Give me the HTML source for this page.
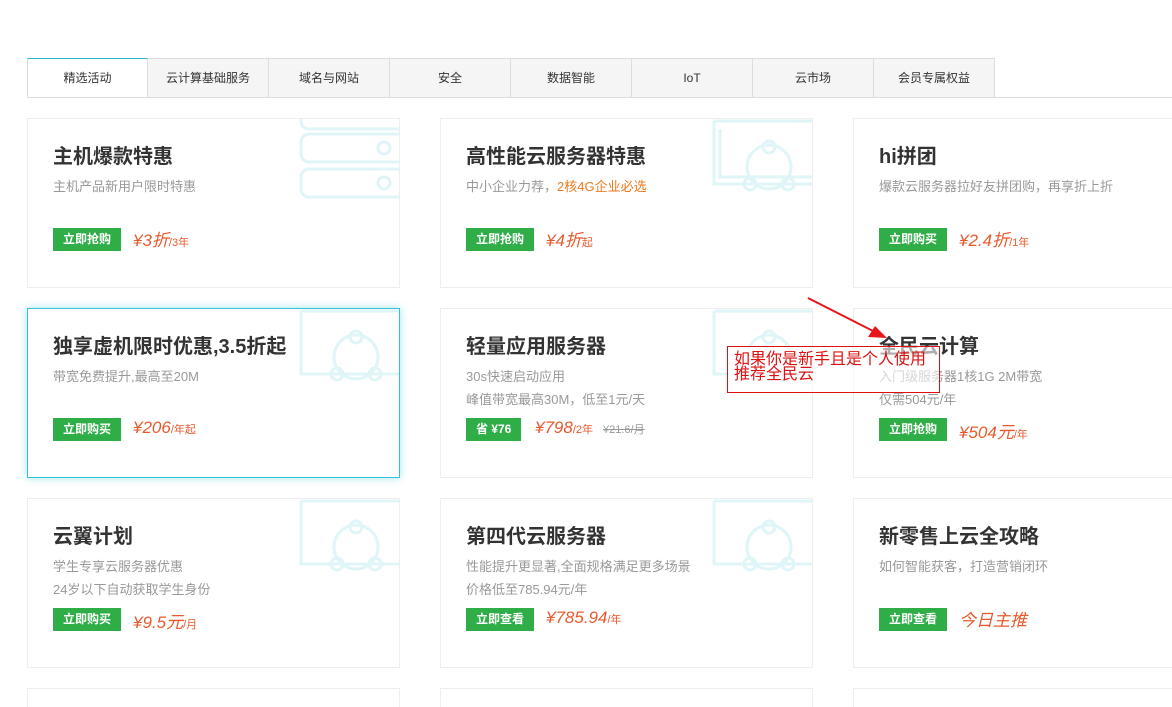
<!DOCTYPE html>
<html><head><meta charset="utf-8"><style>
*{margin:0;padding:0;box-sizing:border-box}
html,body{width:1172px;height:707px;overflow:hidden}
body{background:#fff;font-family:"Liberation Sans","Noto Sans CJK SC",sans-serif;position:relative}
.tabs{position:absolute;left:27px;top:58px;height:40px;display:flex}
.tabs div{width:121px;height:40px;border:1px solid #ddd;border-left:none;background:#f5f5f5;font-size:12px;color:#333;text-align:center;line-height:38px}
.tabs div:first-child{border-left:1px solid #ddd;background:#fff;border-top:1px solid #2bb8c8}
.line{position:absolute;left:995px;top:97px;width:177px;height:1px;background:#ddd}
.card{position:absolute;width:373px;height:170px;border:1px solid #eee;background:#fff;overflow:hidden}
.card.act{border:1px solid #34c3d3;box-shadow:0 0 8px rgba(52,195,211,.45)}
.card h3{position:absolute;left:25px;top:21px;font-size:20px;font-weight:bold;color:#333}
.card .s{position:absolute;left:25px;font-size:13px;color:#999}
.btn{position:absolute;left:25px;top:109px;height:23px;padding:0 10px;background:#2fae48;color:#fff;font-size:12px;font-weight:bold;line-height:23px}
.pr{position:absolute;top:107px;font-size:17px;color:#e85a2e;font-style:italic}
.pr small{font-size:11px;font-style:normal}
.del{color:#999;font-size:11px;text-decoration:line-through;font-style:normal;margin-left:10px}
.deco{position:absolute;right:0;top:0}
.deco g{stroke:#e0f5f7}
.or{color:#ee7a1d}
</style></head><body>
<div class="tabs"><div>精选活动</div><div>云计算基础服务</div><div>域名与网站</div><div>安全</div><div>数据智能</div><div>IoT</div><div>云市场</div><div>会员专属权益</div></div>
<div class="line"></div>

<div class="card" style="left:27px;top:118px"><svg class="deco" width="100" height="110"><g fill="none" stroke-width="3"><rect x="2" y="-10" width="120" height="20" rx="8"/><rect x="2" y="15" width="120" height="28" rx="8"/><rect x="2" y="50" width="120" height="28" rx="8"/><circle cx="85" cy="29" r="6"/><circle cx="85" cy="64" r="6"/></g></svg>
<h3>主机爆款特惠</h3><div class="s" style="top:57px">主机产品新用户限时特惠</div><div class="btn">立即抢购</div><div class="pr" style="left:105px">¥3折<small>/3年</small></div></div>
<div class="card" style="left:440px;top:118px"><svg class="deco" width="110" height="90"><g fill="none" stroke-width="3"><path d="M12 2 H110 M12 2 V65 H110 M18 10 V58 H110"/><circle cx="67" cy="48" r="22"/><circle cx="67" cy="28" r="6"/><circle cx="48" cy="65" r="6"/><circle cx="86" cy="65" r="6"/></g></svg>
<h3>高性能云服务器特惠</h3><div class="s" style="top:57px">中小企业力荐，<span class="or">2核4G企业必选</span></div><div class="btn">立即抢购</div><div class="pr" style="left:105px">¥4折<small>起</small></div></div>
<div class="card" style="left:853px;top:118px"><svg class="deco" width="60" height="90"><g fill="none" stroke-width="3"><path d="M12 2 H60 M12 2 V65 H60"/><circle cx="50" cy="48" r="22"/></g></svg>
<h3>hi拼团</h3><div class="s" style="top:57px">爆款云服务器拉好友拼团购，再享折上折</div><div class="btn">立即购买</div><div class="pr" style="left:105px">¥2.4折<small>/1年</small></div></div>

<div class="card act" style="left:27px;top:308px"><svg class="deco" width="110" height="90"><g fill="none" stroke-width="3"><path d="M12 2 H110 M12 2 V65 H110"/><circle cx="67" cy="48" r="22"/><circle cx="67" cy="28" r="6"/><circle cx="48" cy="65" r="6"/><circle cx="86" cy="65" r="6"/></g></svg>
<h3>独享虚机限时优惠,3.5折起</h3><div class="s" style="top:57px">带宽免费提升,最高至20M</div><div class="btn">立即购买</div><div class="pr" style="left:105px;top:109px">¥206<small>/年起</small></div></div>
<div class="card" style="left:440px;top:308px"><svg class="deco" width="110" height="90"><g fill="none" stroke-width="3"><path d="M12 2 H110 M12 2 V65 H110"/><circle cx="67" cy="48" r="22"/><circle cx="67" cy="28" r="6"/></g></svg>
<h3>轻量应用服务器</h3><div class="s" style="top:57px">30s快速启动应用</div><div class="s" style="top:80px">峰值带宽最高30M，低至1元/天</div><div class="btn">省 ¥76</div><div class="pr" style="left:94px;top:109px">¥798<small>/2年</small><span class="del">¥21.6/月</span></div></div>
<div class="card" style="left:853px;top:308px"><svg class="deco" width="60" height="90"><g fill="none" stroke-width="3"><path d="M12 2 H60 M12 2 V65 H60"/><circle cx="50" cy="48" r="22"/></g></svg>
<h3>全民云计算</h3><div class="s" style="top:57px">入门级服务器1核1G 2M带宽</div><div class="s" style="top:80px">仅需504元/年</div><div class="btn">立即抢购</div><div class="pr" style="left:105px;top:109px">¥504元<small>/年</small></div></div>

<div class="card" style="left:27px;top:498px"><svg class="deco" width="110" height="90"><g fill="none" stroke-width="3"><path d="M12 2 H110 M12 2 V65 H110"/><circle cx="67" cy="48" r="22"/><circle cx="67" cy="28" r="6"/><circle cx="48" cy="65" r="6"/><circle cx="86" cy="65" r="6"/></g></svg>
<h3>云翼计划</h3><div class="s" style="top:57px">学生专享云服务器优惠</div><div class="s" style="top:80px">24岁以下自动获取学生身份</div><div class="btn">立即购买</div><div class="pr" style="left:105px;top:109px">¥9.5元<small>/月</small></div></div>
<div class="card" style="left:440px;top:498px"><svg class="deco" width="110" height="90"><g fill="none" stroke-width="3"><path d="M12 2 H110 M12 2 V65 H110"/><circle cx="67" cy="48" r="22"/><circle cx="67" cy="28" r="6"/><circle cx="48" cy="65" r="6"/><circle cx="86" cy="65" r="6"/></g></svg>
<h3>第四代云服务器</h3><div class="s" style="top:57px">性能提升更显著,全面规格满足更多场景</div><div class="s" style="top:80px">价格低至785.94元/年</div><div class="btn">立即查看</div><div class="pr" style="left:105px;top:109px">¥785.94<small>/年</small></div></div>
<div class="card" style="left:853px;top:498px"><svg class="deco" width="60" height="90"><g fill="none" stroke-width="3"><path d="M12 2 H60 M12 2 V65 H60"/><circle cx="50" cy="48" r="22"/></g></svg>
<h3>新零售上云全攻略</h3><div class="s" style="top:57px">如何智能获客，打造营销闭环</div><div class="btn">立即查看</div><div class="pr" style="left:105px;top:107px">今日主推</div></div>

<div class="card" style="left:27px;top:688px;height:19px;border-bottom:none"></div>
<div class="card" style="left:440px;top:688px;height:19px;border-bottom:none"></div>
<div class="card" style="left:853px;top:688px;height:19px;border-bottom:none"></div>

<svg style="position:absolute;left:0;top:0" width="1172" height="707"><line x1="808" y1="298" x2="875" y2="332" stroke="#e8161a" stroke-width="2"/><polygon points="887,338 868,337 875,326" fill="#e8161a"/></svg>
<div style="position:absolute;left:727px;top:346px;width:213px;height:47px;border:1px solid #d11;background:rgba(255,255,255,.6);color:#d11;font-size:16px;line-height:15px;padding:5px 0 0 6px;font-family:'Liberation Sans','Noto Sans CJK SC',sans-serif">如果你是新手且是个人使用<br>推荐全民云</div>
</body></html>
